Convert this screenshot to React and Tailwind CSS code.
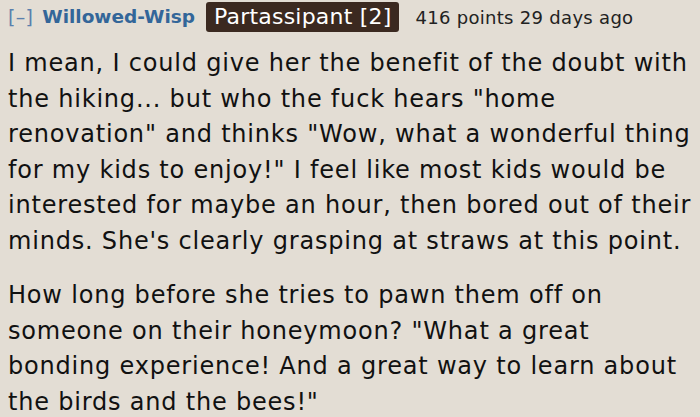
export default function App() {
  return (
    <div
      className="w-[700px] h-[417px] overflow-hidden bg-[#e3ddd4] text-[#111] pl-2 pr-1"
      style={{ fontFamily: '"DejaVu Sans", Verdana, sans-serif' }}
    >
      {/* Comment header */}
      <div className="flex items-center h-[34px] whitespace-nowrap">
        <span className="text-[19px] text-[#5a80ad] mr-[9px] tracking-[0.3px]">[–]</span>
        <span className="text-[18.5px] font-bold text-[#336699] mr-[11px]">Willowed-Wisp</span>
        <span className="bg-[#3b2920] text-white text-[22px] leading-[30px] px-[8px] rounded-[3px] mr-4 tracking-[0.2px]">
          Partassipant [2]
        </span>
        <span className="text-[18px] text-[#222] tracking-[0.3px]">416 points 29 days ago</span>
      </div>

      {/* Comment body */}
      <div className="text-[24px] leading-[35.5px] tracking-[0.8px] mt-[12px]">
        <p>
          I mean, I could give her the benefit of the doubt with the hiking... but who the fuck hears "home
          renovation" and thinks "Wow, what a wonderful thing for my kids to enjoy!" I feel like most kids would be
          interested for maybe an hour, then bored out of their minds. She's clearly grasping at straws at this point.
        </p>
        <p className="mt-[19px]">
          How long before she tries to pawn them off on someone on their honeymoon? "What a great bonding experience!
          And a great way to learn about the birds and the bees!"
        </p>
      </div>
    </div>
  );
}
